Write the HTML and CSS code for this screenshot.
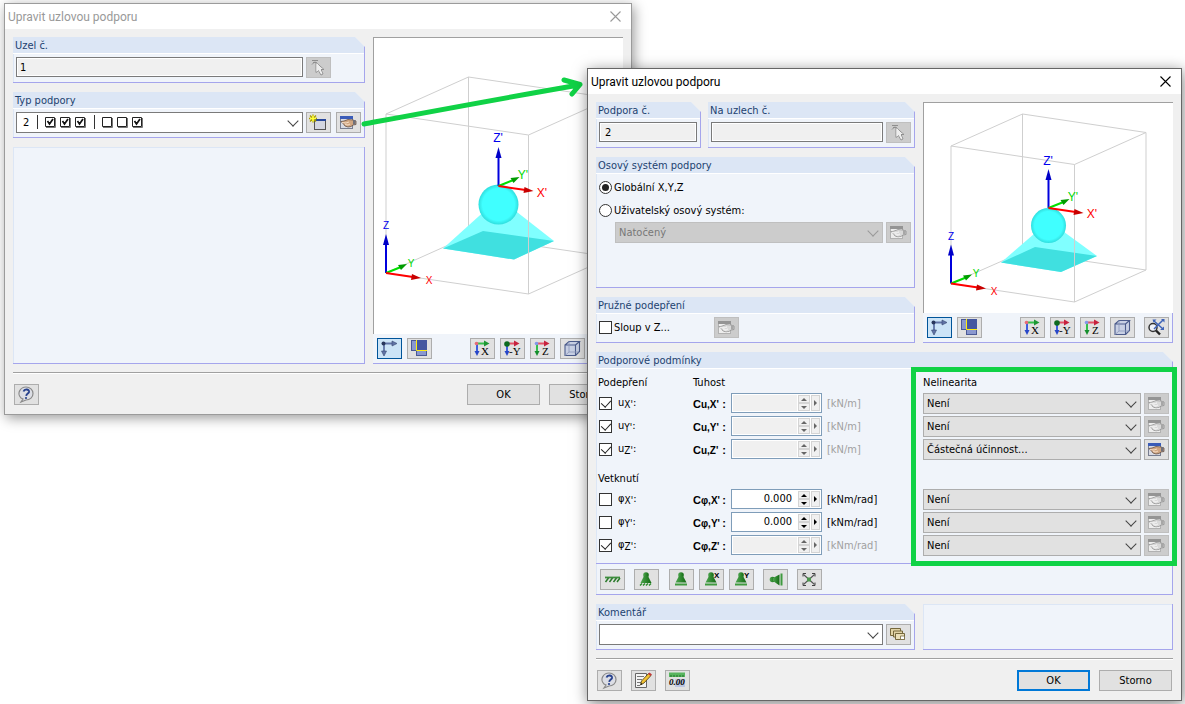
FILE: index.html
```html
<!DOCTYPE html>
<html lang="cs">
<head>
  <meta charset="UTF-8">
  <title>Upravit uzlovou podporu</title>
  <link rel="stylesheet" href="styles.css">
</head>
<body>

<!-- icon library -->
<svg class="iconLibrary" aria-hidden="true">
  <defs>
    <linearGradient id="greenShade" x1="0" x2="1" y1="0" y2="0">
      <stop offset="0" stop-color="#4fa64f"/><stop offset="1" stop-color="#126a12"/>
    </linearGradient>
    <radialGradient id="ballShade" cx="0.5" cy="0.5" r="0.5">
      <stop offset="0.8" stop-color="#40ffff"/><stop offset="1" stop-color="#30dede"/>
    </radialGradient>
    <symbol id="i-close" viewBox="0 0 11 11"><path d="M0.5 0.5L10.5 10.5M10.5 0.5L0.5 10.5" fill="none" stroke="currentColor" stroke-width="1.1"/></symbol>
    <symbol id="i-pick" viewBox="1 1 23 19">
      <path d="M6 3.500h6M7 5.500h4M6 7.500l3-3" stroke="#555" fill="none"/>
      <path d="M10 5.500v10l2.500-2 2.500 4.500 2-1-2-4.500h3z" fill="#fff" stroke="#555" stroke-width="1"/>
    </symbol>
    <symbol id="i-new" viewBox="1 1 23 19">
      <rect x="8.500" y="7.500" width="11" height="10" fill="#d3d6e0" stroke="#555"/>
      <rect x="8" y="7" width="12" height="2" fill="#27479b"/>
      <path d="M7 2.500v8M3 6.500h8M4 3.500l6 6M10 3.500l-6 6" stroke="#a89b00" stroke-width="1.400"/>
      <path d="M7 3.500v6M4 6.500h6" stroke="#ffff3c" stroke-width="1.600"/>
    </symbol>
    <symbol id="i-hand" viewBox="1 1 23 19">
      <rect x="4.500" y="4.500" width="12" height="12" fill="#d9dbe4" stroke="#777d90"/>
      <rect x="4" y="4" width="13" height="3" fill="#3a5cb8"/>
      <path d="M5 9.500l3-0.500 4-1.500 5 0.500 3 1v3.500l-3 0.500-2 1.500-3 0.500-3-1-1.500-2z" fill="#d0a682" stroke="#5a4436" stroke-width="0.700"/>
      <path d="M6 10.500l4 0.500 3-1M9 12.500l3 0.500 2-1" stroke="#f6dcc4" fill="none"/>
      <path d="M17 8h2.500v4.500H17z" fill="#70707a"/>
    </symbol>
    <symbol id="i-axes" viewBox="1 1 23 19">
      <path d="M6 5.500h10M7 6v8" stroke="#6275a8" stroke-width="1.800"/>
      <path d="M15 3l5 2.500-5 2.500zM4.500 13h5l-2.500 5z" fill="#6275a8" stroke="#36456f" stroke-width="0.600"/>
      <circle cx="6.500" cy="5.500" r="2" fill="#28365c"/>
    </symbol>
    <symbol id="i-planes" viewBox="1 1 23 19">
      <rect x="4.500" y="2.500" width="6" height="10" fill="#8a98cf" stroke="#4a5996"/>
      <rect x="9.500" y="12.500" width="10" height="5" fill="#8a98cf" stroke="#4a5996"/>
      <rect x="10" y="2" width="10" height="10" fill="#4557a0"/>
      <path d="M9.500 2v10.500H20" fill="none" stroke="#ffee10"/>
    </symbol>
    <symbol id="i-viewX" viewBox="1 1 23 19">
      <path d="M7 6v8" stroke="#3d5fe0" stroke-width="2"/><path d="M4.500 13h5l-2.500 5z" fill="#2746c8"/>
      <path d="M7 5.500h8" stroke="#35bf4b" stroke-width="2"/><path d="M14 2.500l5.500 3-5.500 3z" fill="#1d9834"/>
      <circle cx="6.500" cy="5.500" r="1.800" fill="#e86a78"/>
      <text x="11" y="17" class="iconLetter">X</text>
    </symbol>
    <symbol id="i-viewY" viewBox="1 1 23 19">
      <path d="M7 6v8" stroke="#3d5fe0" stroke-width="2"/><path d="M4.500 13h5l-2.500 5z" fill="#2746c8"/>
      <path d="M7 5.500h8" stroke="#e25267" stroke-width="2"/><path d="M14 2.500l5.500 3-5.500 3z" fill="#c7223e"/>
      <circle cx="7" cy="6" r="2.800" fill="#0c6b1f"/>
      <text x="9" y="17" class="iconLetter">-Y</text>
    </symbol>
    <symbol id="i-viewZ" viewBox="1 1 23 19">
      <path d="M7 6v8" stroke="#35bf4b" stroke-width="2"/><path d="M4.500 13h5l-2.500 5z" fill="#148e2c"/>
      <path d="M7 5.500h8" stroke="#e25267" stroke-width="2"/><path d="M14 2.500l5.500 3-5.500 3z" fill="#c7223e"/>
      <circle cx="6.500" cy="5.500" r="1.800" fill="#8398ea"/>
      <text x="12" y="17" class="iconLetter">Z</text>
    </symbol>
    <symbol id="i-cube" viewBox="1 1 23 19">
      <path d="M5 7l4-3.500h10.500v10L16 17.500H5z" fill="#c8d0e4"/>
      <path d="M5 7h10.500v10.500H5zM5 7l4-3.500h10.500L15.500 7M19.500 3.500v10l-4 4" fill="none" stroke="#4c5c8c" stroke-width="1.100"/>
      <path d="M9 3.500v10.500h10M9 14l-4 3.500" fill="none" stroke="#8c98ba" stroke-width="0.800"/>
    </symbol>
    <symbol id="i-fit" viewBox="1 1 23 19">
      <circle cx="9" cy="10.500" r="4" fill="#eef2fa" stroke="#333" stroke-width="1.500"/>
      <path d="M12 13.500l4 4" stroke="#222" stroke-width="2.400"/>
      <path d="M10 4l9 8M19 3l-9 9" stroke="#3d63b8" stroke-width="1.500"/>
      <path d="M17 2h3.500v3.500zM20 13h-4l4-3.500zM8.500 2.500h4l-3 3z" fill="#3d63b8"/>
    </symbol>
    <symbol id="i-help" viewBox="1 1 23 19">
      <path d="M7 14c-5-5 0-11 5-11 4 0 7 3 7 6.500S16 16 12 16l-5 2 2-3z" fill="#dcdee5" stroke="#8a8a8a" stroke-width="1.200"/>
      <path d="M9.500 7.500c1-3 6-2.500 5.500 0.500-0.300 1.500-2.500 1.800-2.800 3.800" fill="none" stroke="#27418d" stroke-width="1.900"/>
      <circle cx="12" cy="14" r="1.100" fill="#27418d"/>
    </symbol>
    <symbol id="i-edit" viewBox="1 1 23 19">
      <path d="M4.500 3.500h11v14h-11z" fill="#f4f4f4" stroke="#666"/>
      <path d="M6 6.500h7M6 9.500h5M6 12.500h4M6 15.500h3" stroke="#777"/>
      <path d="M9.500 15l1-4 7-7.500 2.500 2-7 7.500z" fill="#f1c232" stroke="#4b3a10" stroke-width="0.800"/>
      <path d="M17 4l1.500-1.500 2.500 2L19.500 6z" fill="#c23a3a"/>
      <path d="M9.500 15l0.800-2 1.200 1z" fill="#111"/>
    </symbol>
    <symbol id="i-units" viewBox="1 1 23 19">
      <path d="M4 2.500h16v4.500H4z" fill="#58b45f"/><path d="M6 5v2M9 5v2M12 5v2M15 5v2M18 5v2" stroke="#1f6e28"/>
      <path d="M10 9h10v8H10z" fill="#bcc6e2"/>
      <text x="4" y="15" class="iconUnits">0.00</text>
    </symbol>
    <symbol id="i-cards" viewBox="1 1 23 19">
      <path d="M4.500 4.500h10v7h-10z" fill="#e1d3a5" stroke="#76683c"/>
      <path d="M7.500 7h9v6h-9z" fill="#e1d3a5" stroke="#76683c"/>
      <path d="M9.500 9.500h9v6h-9z" fill="#eadfb9" stroke="#76683c"/>
      <path d="M14.500 12h4v3.500h-4z" fill="#fff" stroke="#76683c" stroke-width="0.800"/>
    </symbol>
    <symbol id="i-fixed" viewBox="1 1 23 19">
      <path d="M5 8.500h15" stroke="#3f8f3f" stroke-width="1.800"/>
      <path d="M5.500 13l3-4M9.500 13l3-4M13.500 13l3-4M17 13l3-4" stroke="#2b7a2b" stroke-width="1.500"/>
    </symbol>
    <symbol id="i-hinged" viewBox="1 1 23 19">
      <circle cx="12" cy="6" r="2.800" fill="url(#greenShade)"/><path d="M10 7h4l3.500 7H6.500z" fill="url(#greenShade)"/>
      <path d="M6 16.500l2-2M9 16.500l2-2M12 16.500l2-2M15 16.500l2-2" stroke="#2b8a2b" stroke-width="1.400"/>
    </symbol>
    <symbol id="i-slide" viewBox="1 1 23 19">
      <circle cx="12" cy="6" r="2.800" fill="url(#greenShade)"/><path d="M10 7h4l3.500 6.500H6.500z" fill="url(#greenShade)"/>
      <path d="M6 14.500h12v2H6z" fill="#3f9a3f"/>
    </symbol>
    <symbol id="i-slideX" viewBox="1 1 23 19"><use href="#i-slide" x="1" y="1" width="23" height="19"/><text x="15" y="9" class="iconTag">X</text></symbol>
    <symbol id="i-slideY" viewBox="1 1 23 19"><use href="#i-slide" x="1" y="1" width="23" height="19"/><text x="15" y="9" class="iconTag">Y</text></symbol>
    <symbol id="i-side" viewBox="1 1 23 19">
      <circle cx="9.500" cy="10.500" r="2.800" fill="url(#greenShade)"/><path d="M10 9l6.500-3.500v11L10 12z" fill="url(#greenShade)"/>
      <path d="M17.500 4.500h2v12h-2z" fill="#3f9a3f"/>
    </symbol>
    <symbol id="i-free" viewBox="1 1 23 19">
      <path d="M6.500 5.500l11 10M17.500 5.500l-11 10" stroke="#555" stroke-width="1.100"/>
      <path d="M6 7.500V4.500h3M15 4.500h3v3M18 13.500v3h-3M9 16.500H6v-3" fill="none" stroke="#444"/>
      <rect x="10" y="8.500" width="4" height="4" fill="#4b964b"/>
    </symbol>
    <!-- coordinate tripod, origin at 0,0 -->
    <g id="tripod">
      <path d="M0 0L0 -30" stroke="#00d" stroke-width="2"/><path d="M-3 -28h6L0 -39z" fill="#0000c8"/>
      <path d="M0 0L15 -6" stroke="#00e000" stroke-width="2"/><path d="M12 -8l9 -1-6 6z" fill="#009c00"/>
      <path d="M0 0L27 4" stroke="#f00" stroke-width="2"/><path d="M26 1l9 4-10 2z" fill="#c80000"/>
    </g>
  </defs>
</svg>

<main class="desktop">

  <!-- parent dialog -->
  <section class="dialog dialogBack">
    <header class="titleBar">
      <h1>Upravit uzlovou podporu</h1>
      <button class="closeButton" aria-label="Zavřít"><svg><use href="#i-close"/></svg></button>
    </header>
    <div class="columns">
      <div class="settings">
        <section class="group">
          <h2><label for="nodeNo">Uzel č.</label></h2>
          <div class="fieldRow">
            <input class="textField" id="nodeNo" value="1" readonly>
            <button class="iconButton" disabled aria-label="Vybrat"><svg><use href="#i-pick"/></svg></button>
            <span class="buttonSpace"></span>
          </div>
        </section>
        <section class="group">
          <h2><label for="supportType">Typ podpory</label></h2>
          <div class="fieldRow">
            <div class="combo comboWhite">
              <select id="supportType"><option>2</option></select>
              <svg class="typePreview" viewBox="0 0 104 15" aria-hidden="true">
                <path d="M0.500 1v14M57.500 1v14" stroke="#333"/>
                <path d="M18.500 4v9.500H9M33.500 4v9.500H24M48.500 4v9.500H39M75.500 4v9.500H66M90.500 4v9.500H81M105.500 4v9.500H96" fill="none" stroke="#777"/>
                <path d="M8.500 3.500h9v9h-9zM23.500 3.500h9v9h-9zM38.500 3.500h9v9h-9zM65.500 3.500h9v9h-9zM80.500 3.500h9v9h-9zM95.500 3.500h9v9h-9z" fill="#fff" stroke="#222"/>
                <path d="M10.500 7l2 3 3.500-5M25.500 7l2 3 3.500-5M40.500 7l2 3 3.500-5M97.500 7l2 3 3.500-5" fill="none" stroke="#111" stroke-width="1.700"/>
              </svg>
            </div>
            <button class="iconButton" aria-label="Nový"><svg><use href="#i-new"/></svg></button>
            <button class="iconButton" aria-label="Upravit"><svg><use href="#i-hand"/></svg></button>
          </div>
        </section>
        <div class="group blank grow"></div>
      </div>
      <div class="view">
        <svg class="scene" viewBox="0 0 249 296" role="img" aria-label="Podpora">
          <g class="cube"><path d="M12 76L94.500 39 237 60 154.500 97zM12 235L94.500 198 237 219M12 76v159M94.500 39v159M237 60v159"/></g>
          <path d="M69 210.500L125 160l55 43-40 18.500z" fill="#80ffff"/>
          <path d="M69 210.500L109 193l71 10-40 18.500z" fill="#40e0e0"/>
          <circle cx="124.500" cy="166.500" r="20" fill="url(#ballShade)"/>
          <g class="cube"><path d="M12 235l142.500 21L237 219M154.500 97v159"/></g>
          <use href="#tripod" x="12" y="235"/>
          <text x="12" y="191" class="axisZ">Z</text><text x="37" y="229" class="axisY">Y</text><text x="55" y="246" class="axisX">X</text>
          <use href="#tripod" x="124.500" y="148"/>
          <text x="124" y="104" class="axisZ local">Z'</text><text x="149" y="141" class="axisY local">Y'</text><text x="168" y="159" class="axisX local">X'</text>
        </svg>
        <div class="viewTools">
          <button class="iconButton pressed" aria-label="Osy"><svg><use href="#i-axes"/></svg></button>
          <button class="iconButton" aria-label="Roviny"><svg><use href="#i-planes"/></svg></button>
          <button class="iconButton pushRight" aria-label="Pohled X"><svg><use href="#i-viewX"/></svg></button>
          <button class="iconButton" aria-label="Pohled -Y"><svg><use href="#i-viewY"/></svg></button>
          <button class="iconButton" aria-label="Pohled Z"><svg><use href="#i-viewZ"/></svg></button>
          <button class="iconButton" aria-label="Izometrie"><svg><use href="#i-cube"/></svg></button>
          <button class="iconButton apart" aria-label="Celý pohled"><svg><use href="#i-fit"/></svg></button>
        </div>
      </div>
    </div>
    <footer class="dialogFooter">
      <button class="iconButton" aria-label="Nápověda"><svg><use href="#i-help"/></svg></button>
      <button class="pushButton pushRight">OK</button>
      <button class="pushButton">Storno</button>
    </footer>
  </section>

  <svg class="arrow" viewBox="0 0 226 52" aria-hidden="true">
    <path d="M5 47C75 34 150 20 220 8M205 3L221 7.500 213 17" fill="none" stroke="#10d246" stroke-width="5" stroke-linecap="round" stroke-linejoin="round"/>
  </svg>

  <!-- child dialog -->
  <section class="dialog dialogFront">
    <header class="titleBar">
      <h1>Upravit uzlovou podporu</h1>
      <button class="closeButton" aria-label="Zavřít"><svg><use href="#i-close"/></svg></button>
    </header>
    <div class="columns">
      <div class="settings">
        <div class="groupPair">
          <section class="group narrow">
            <h2><label for="supportNo">Podpora č.</label></h2>
            <div class="fieldRow"><input class="textField indent" id="supportNo" value="2" readonly></div>
          </section>
          <section class="group grow">
            <h2><label for="onNodes">Na uzlech č.</label></h2>
            <div class="fieldRow">
              <input class="textField" id="onNodes" readonly>
              <button class="iconButton" disabled aria-label="Vybrat"><svg><use href="#i-pick"/></svg></button>
            </div>
          </section>
        </div>
        <section class="group axisGroup grow">
          <h2>Osový systém podpory</h2>
          <label class="optionRow"><input type="radio" name="axis" checked>Globální X,Y,Z</label>
          <label class="optionRow"><input type="radio" name="axis">Uživatelský osový systém:</label>
          <div class="fieldRow sub">
            <div class="combo"><select disabled aria-label="Osový systém"><option>Natočený</option></select></div>
            <button class="iconButton" disabled aria-label="Upravit"><svg><use href="#i-hand"/></svg></button>
          </div>
        </section>
        <section class="group">
          <h2>Pružné podepření</h2>
          <div class="fieldRow">
            <label class="optionRow columnOption"><input type="checkbox">Sloup v Z...</label>
            <button class="iconButton" disabled aria-label="Upravit"><svg><use href="#i-hand"/></svg></button>
          </div>
        </section>
      </div>
      <div class="view">
        <svg class="scene" viewBox="0 0 249 210" role="img" aria-label="Podpora">
          <g class="cube"><path d="M27 43L98.500 11 222 29.500 150.500 61.500zM27 180.500L98.500 149 222 167M27 43v137.500M98.500 11v138M222 29.500V167"/></g>
          <path d="M77 159.500L125 118l48 35-36 16z" fill="#80ffff"/>
          <path d="M77 159.500L111 144l62 9-36 16z" fill="#40e0e0"/>
          <circle cx="124.500" cy="122.500" r="17.500" fill="url(#ballShade)"/>
          <g class="cube"><path d="M27 180.500l123.500 18.500L222 167M150.500 61.500V199"/></g>
          <use href="#tripod" x="27" y="180.500"/>
          <text x="27" y="137" class="axisZ">Z</text><text x="52" y="174" class="axisY">Y</text><text x="70" y="192" class="axisX">X</text>
          <use href="#tripod" x="124.500" y="105"/>
          <text x="124" y="62" class="axisZ local">Z'</text><text x="149" y="98" class="axisY local">Y'</text><text x="168" y="115" class="axisX local">X'</text>
        </svg>
        <div class="viewTools">
          <button class="iconButton pressed" aria-label="Osy"><svg><use href="#i-axes"/></svg></button>
          <button class="iconButton" aria-label="Roviny"><svg><use href="#i-planes"/></svg></button>
          <button class="iconButton pushRight" aria-label="Pohled X"><svg><use href="#i-viewX"/></svg></button>
          <button class="iconButton" aria-label="Pohled -Y"><svg><use href="#i-viewY"/></svg></button>
          <button class="iconButton" aria-label="Pohled Z"><svg><use href="#i-viewZ"/></svg></button>
          <button class="iconButton" aria-label="Izometrie"><svg><use href="#i-cube"/></svg></button>
          <button class="iconButton apart" aria-label="Celý pohled"><svg><use href="#i-fit"/></svg></button>
        </div>
      </div>
    </div>

    <section class="group conditions">
      <h2>Podporové podmínky</h2>
      <div class="conditionGrid">
        <div class="conditionRow headRow"><span>Podepření</span><span>Tuhost</span><span></span><span></span><span>Nelinearita</span></div>
        <div class="conditionRow">
          <label class="dof"><input type="checkbox" checked>u<small>X'</small>:</label>
          <label class="constant" for="cux">C<small>u,X'</small><i>:</i></label>
          <div class="spin"><input id="cux" disabled><span class="spinPair"><button class="up" disabled aria-label="Více"></button><button class="down" disabled aria-label="Méně"></button></span><button class="next" disabled aria-label="Další"></button></div>
          <span class="unit off">[kN/m]</span>
          <div class="combo"><select aria-label="Nelinearita uX"><option>Není</option></select></div>
          <button class="iconButton" disabled aria-label="Upravit"><svg><use href="#i-hand"/></svg></button>
        </div>
        <div class="conditionRow">
          <label class="dof"><input type="checkbox" checked>u<small>Y'</small>:</label>
          <label class="constant" for="cuy">C<small>u,Y'</small><i>:</i></label>
          <div class="spin"><input id="cuy" disabled><span class="spinPair"><button class="up" disabled aria-label="Více"></button><button class="down" disabled aria-label="Méně"></button></span><button class="next" disabled aria-label="Další"></button></div>
          <span class="unit off">[kN/m]</span>
          <div class="combo"><select aria-label="Nelinearita uY"><option>Není</option></select></div>
          <button class="iconButton" disabled aria-label="Upravit"><svg><use href="#i-hand"/></svg></button>
        </div>
        <div class="conditionRow">
          <label class="dof"><input type="checkbox" checked>u<small>Z'</small>:</label>
          <label class="constant" for="cuz">C<small>u,Z'</small><i>:</i></label>
          <div class="spin"><input id="cuz" disabled><span class="spinPair"><button class="up" disabled aria-label="Více"></button><button class="down" disabled aria-label="Méně"></button></span><button class="next" disabled aria-label="Další"></button></div>
          <span class="unit off">[kN/m]</span>
          <div class="combo"><select aria-label="Nelinearita uZ"><option>Částečná účinnost...</option></select></div>
          <button class="iconButton" aria-label="Upravit"><svg><use href="#i-hand"/></svg></button>
        </div>
        <div class="conditionRow headRow second"><span>Vetknutí</span></div>
        <div class="conditionRow">
          <label class="dof"><input type="checkbox">φ<small>X'</small>:</label>
          <label class="constant" for="cpx">C<small>φ,X'</small><i>:</i></label>
          <div class="spin"><input id="cpx" value="0.000"><span class="spinPair"><button class="up" aria-label="Více"></button><button class="down" aria-label="Méně"></button></span><button class="next" aria-label="Další"></button></div>
          <span class="unit">[kNm/rad]</span>
          <div class="combo"><select aria-label="Nelinearita φX"><option>Není</option></select></div>
          <button class="iconButton" disabled aria-label="Upravit"><svg><use href="#i-hand"/></svg></button>
        </div>
        <div class="conditionRow">
          <label class="dof"><input type="checkbox">φ<small>Y'</small>:</label>
          <label class="constant" for="cpy">C<small>φ,Y'</small><i>:</i></label>
          <div class="spin"><input id="cpy" value="0.000"><span class="spinPair"><button class="up" aria-label="Více"></button><button class="down" aria-label="Méně"></button></span><button class="next" aria-label="Další"></button></div>
          <span class="unit">[kNm/rad]</span>
          <div class="combo"><select aria-label="Nelinearita φY"><option>Není</option></select></div>
          <button class="iconButton" disabled aria-label="Upravit"><svg><use href="#i-hand"/></svg></button>
        </div>
        <div class="conditionRow">
          <label class="dof"><input type="checkbox" checked>φ<small>Z'</small>:</label>
          <label class="constant" for="cpz">C<small>φ,Z'</small><i>:</i></label>
          <div class="spin"><input id="cpz" disabled><span class="spinPair"><button class="up" disabled aria-label="Více"></button><button class="down" disabled aria-label="Méně"></button></span><button class="next" disabled aria-label="Další"></button></div>
          <span class="unit off">[kNm/rad]</span>
          <div class="combo"><select aria-label="Nelinearita φZ"><option>Není</option></select></div>
          <button class="iconButton" disabled aria-label="Upravit"><svg><use href="#i-hand"/></svg></button>
        </div>
      </div>
      <div class="presets">
        <button class="iconButton" aria-label="Vetknutí"><svg><use href="#i-fixed"/></svg></button>
        <button class="iconButton" aria-label="Kloub"><svg><use href="#i-hinged"/></svg></button>
        <div class="presetSet">
          <button class="iconButton" aria-label="Posuvná"><svg><use href="#i-slide"/></svg></button>
          <button class="iconButton" aria-label="Posuvná v X"><svg><use href="#i-slideX"/></svg></button>
          <button class="iconButton" aria-label="Posuvná v Y"><svg><use href="#i-slideY"/></svg></button>
        </div>
        <button class="iconButton" aria-label="Boční"><svg><use href="#i-side"/></svg></button>
        <button class="iconButton" aria-label="Volná"><svg><use href="#i-free"/></svg></button>
      </div>
    </section>

    <div class="columns lower">
      <section class="group settings">
        <h2><label for="comment">Komentář</label></h2>
        <div class="fieldRow">
          <div class="combo comboWhite"><select id="comment"><option></option></select></div>
          <button class="iconButton" aria-label="Komentáře"><svg><use href="#i-cards"/></svg></button>
        </div>
      </section>
      <div class="group blank view"></div>
    </div>

    <footer class="dialogFooter">
      <button class="iconButton" aria-label="Nápověda"><svg><use href="#i-help"/></svg></button>
      <button class="iconButton" aria-label="Poznámka"><svg><use href="#i-edit"/></svg></button>
      <button class="iconButton" aria-label="Jednotky"><svg><use href="#i-units"/></svg></button>
      <button class="pushButton primary pushRight">OK</button>
      <button class="pushButton">Storno</button>
    </footer>
    <div class="highlight"></div>
  </section>
</main>
</body>
</html>
```
FILE: styles.css
```css
:root {
  --face: #f0f0f0;
  --panel: #f0f4fa;
  --panelHead: #dce6f5;
  --panelEdge: #a5a5ec;
  --heading: #1c4270;
  --button: #e1e1e1;
  --edge: #adadad;
  --marker: #10d246;
}
* {
  box-sizing: border-box;
}
body {
  margin: 0;
  background: #fff;
  color: #000;
  font: 11px/14px "DejaVu Sans Condensed", "DejaVu Sans", sans-serif;
  overflow: hidden;
}
button, input, select {
  font: inherit;
  color: inherit;
  margin: 0;
  padding: 0;
}
h1, h2 {
  margin: 0;
  font-size: 11px;
  font-weight: normal;
}
.iconLibrary {
  position: absolute;
  width: 0;
  height: 0;
}
.desktop {
  position: relative;
  min-height: 100vh;
}

/* windows */
.dialog {
  position: absolute;
  background: var(--face);
  border: 1px solid #9b9b9b;
}
.dialogBack {
  left: 4px;
  top: 3px;
  width: 628px;
  box-shadow: 2px 3px 12px rgba(0, 0, 0, 0.4);
}
.dialogFront {
  left: 587px;
  top: 68px;
  width: 595px;
  border-color: #666;
  box-shadow: 1px 3px 14px rgba(0, 0, 0, 0.5);
}
.titleBar {
  display: flex;
  align-items: center;
  justify-content: space-between;
  height: 25px;
  padding: 0 10px 0 3px;
  background: #fff;
}
.titleBar h1 {
  font-family: Roboto, sans-serif;
  font-size: 12px;
}
.closeButton {
  display: flex;
  border: 0;
  background: none;
}
.closeButton svg {
  width: 11px;
  height: 11px;
}
.dialogBack .titleBar {
  color: #999;
}
.columns {
  display: flex;
  gap: 8px;
  padding: 8px 8px 0;
}
.settings {
  flex: 1;
  min-width: 0;
}
.columns > div.settings {
  display: flex;
  flex-direction: column;
  gap: 9px;
}
.grow {
  flex: 1;
}

/* framed groups with the cut corner */
.group {
  background: var(--panel);
  border: 1px solid var(--panelEdge);
  border-width: 0 1px 1px 0;
  box-shadow: inset 1px 0 var(--panelHead);
  clip-path: polygon(0 0, calc(100% - 10px) 0, 100% 10px, 100% 100%, 0 100%);
}
.group h2 {
  height: 17px;
  padding: 1px 2px 0;
  line-height: 15px;
  color: var(--heading);
  background: var(--panelHead);
  border-bottom: 1px solid #fff;
}
.blank {
  clip-path: none;
  box-shadow: inset 1px 1px var(--panelHead);
}
.groupPair {
  display: flex;
  gap: 7px;
}
.narrow {
  width: 105px;
}
.fieldRow {
  display: flex;
  gap: 3px;
  padding: 3px 3px 4px;
}
.fieldRow .iconButton + .iconButton {
  margin-left: 2px;
}
.textField {
  flex: 1;
  min-width: 0;
  height: 20px;
  padding: 0 3px;
  background: var(--face);
  border: 1px solid #7a7a7a;
  box-shadow: inset 0 0 0 1px #fff;
}
.indent {
  padding-left: 5px;
}
.buttonSpace {
  width: 27px;
}
.axisGroup {
  min-height: 130px;
}
.axisGroup h2 {
  margin-bottom: 2px;
}
.optionRow {
  display: flex;
  align-items: center;
  gap: 2px;
  height: 23px;
  margin-left: 3px;
}
.fieldRow.sub {
  padding: 0 3px 4px 19px;
}
.columnOption {
  width: 112px;
  height: 21px;
  margin-left: 0;
}

/* controls */
input[type="checkbox"], input[type="radio"] {
  appearance: none;
  flex: none;
  position: relative;
  width: 13px;
  height: 13px;
  background: #fff;
  border: 1px solid #333;
}
input[type="radio"] {
  border-radius: 50%;
}
input[type="radio"]:checked::after {
  content: "";
  position: absolute;
  inset: 2px;
  border-radius: 50%;
  background: #222;
}
input[type="checkbox"]:checked::after {
  content: "";
  position: absolute;
  left: 3px;
  top: 0;
  width: 5px;
  height: 8px;
  border: solid #222;
  border-width: 0 1px 1px 0;
  transform: rotate(42deg);
}
.iconButton {
  flex: none;
  display: block;
  width: 25px;
  height: 21px;
  background: var(--button);
  border: 1px solid var(--edge);
}
.iconButton svg {
  display: block;
  width: 23px;
  height: 19px;
}
.iconButton:disabled {
  background: #ccc;
  border-color: #bfbfbf;
}
.iconButton:disabled svg {
  filter: grayscale(1) brightness(1.3);
  opacity: 0.65;
}
.pressed {
  background: #cce4f7;
  border-color: #005499;
}
.iconLetter {
  font: 11px "Liberation Serif", serif;
}
.iconUnits {
  font: italic bold 9px "Liberation Serif", serif;
}
.iconTag {
  font: bold 8px "Liberation Sans", sans-serif;
}
.combo {
  position: relative;
  flex: 1;
  min-width: 0;
}
.combo select {
  appearance: none;
  display: block;
  width: 100%;
  height: 21px;
  padding: 0 20px 0 3px;
  background: var(--button);
  border: 1px solid var(--edge);
  border-radius: 0;
}
.combo::after {
  content: "";
  position: absolute;
  right: 6px;
  top: 5px;
  width: 7px;
  height: 7px;
  border: solid #444;
  border-width: 0 1px 1px 0;
  transform: rotate(45deg);
  pointer-events: none;
}
.comboWhite select {
  background: #fff;
  border-color: #7a7a7a;
  padding-left: 6px;
}
.combo select:disabled {
  background: #ccc;
  border-color: #bfbfbf;
  color: #777;
  opacity: 1;
}
.combo:has(select:disabled)::after {
  border-color: #999;
}
.typePreview {
  position: absolute;
  left: 21px;
  top: 2px;
  width: 104px;
  height: 15px;
  overflow: visible;
  pointer-events: none;
}
.pushButton {
  width: 73px;
  height: 21px;
  background: var(--button);
  border: 1px solid var(--edge);
}
.primary {
  border: 2px solid #0078d7;
}
.pushRight {
  margin-left: auto;
}

/* preview */
.view {
  display: flex;
  flex-direction: column;
  width: 250px;
}
.scene {
  display: block;
  width: 100%;
  background: #fff;
  border: 1px solid #a0a0a0;
  border-width: 1px 0 0 1px;
}
.cube {
  fill: none;
  stroke: #cfcfcf;
}
.axisZ, .axisY, .axisX {
  font: 10px "Liberation Sans", sans-serif;
  text-anchor: middle;
}
.local {
  font-size: 12px;
}
.axisZ {
  fill: #00e;
}
.axisY {
  fill: #00d800;
}
.axisX {
  fill: #f00;
}
.viewTools {
  display: flex;
  gap: 5px;
  padding: 4px 3px 4px 4px;
  background: var(--panel);
  border: solid var(--panelEdge);
  border-width: 0 1px 1px 0;
}
.apart {
  margin-left: 4px;
}

/* support conditions */
.conditions {
  margin: 9px 8px 0;
}
.conditionGrid {
  padding-bottom: 6px;
  border-bottom: 1px solid var(--panelEdge);
}
.conditionRow {
  display: grid;
  grid-template-columns: 95px 38px 91px minmax(0, 1fr) 218px 28px;
  align-items: center;
  height: 23px;
  padding: 0 3px 0 2px;
}
.conditionRow .iconButton {
  justify-self: end;
}
.headRow {
  padding-top: 4px;
}
.second {
  height: 27px;
  padding-top: 8px;
}
.dof {
  display: flex;
  align-items: center;
  padding: 0 0 1px 1px;
}
.dof input {
  margin-right: 6px;
}
.dof small, .constant small {
  font-size: 10px;
  padding-top: 3px;
}
.constant {
  display: flex;
  align-items: center;
  font-family: "Liberation Sans", sans-serif;
  font-weight: bold;
}
.constant i {
  font-style: normal;
  margin: 0 5px 0 auto;
}
.spin {
  display: flex;
  gap: 1px;
  height: 20px;
  margin-bottom: 1px;
  padding: 1px;
  background: #fff;
  border: 1px solid #7f9db9;
}
.spin input {
  flex: 1;
  min-width: 0;
  padding-right: 5px;
  border: 0;
  text-align: right;
  background: #fff;
}
.spin input:disabled {
  background: var(--face);
}
.spinPair {
  display: flex;
  flex-direction: column;
  width: 12px;
}
.spin button {
  display: flex;
  flex: 1;
  align-items: center;
  justify-content: center;
  background: var(--face);
  border: 1px solid #d4d4d4;
}
.spin button.next {
  flex: none;
  width: 9px;
}
.spin button::after {
  content: "";
  border: 3px solid transparent;
}
.spin .up::after {
  border-width: 0 3px 3px;
  border-bottom-color: currentColor;
}
.spin .down::after {
  border-width: 3px 3px 0;
  border-top-color: currentColor;
}
.spin .next::after {
  border-width: 3px 0 3px 3px;
  border-left-color: currentColor;
}
.spin button:disabled {
  color: #666;
}
.unit {
  padding-left: 5px;
}
.off {
  color: #a0a0a0;
}
.presets {
  display: flex;
  gap: 9px;
  padding: 5px 4px 4px;
}
.presetSet {
  display: flex;
  gap: 5px;
  margin: 0 0 0 1px;
}
.lower {
  padding-top: 9px;
}
.dialogFooter {
  display: flex;
  gap: 9px;
  margin: 8px 8px 0;
  padding: 11px 1px 9px;
  border-top: 1px solid #a0a0a0;
  box-shadow: inset 0 1px #fff;
}

/* annotations drawn over the windows */
.arrow {
  position: absolute;
  left: 359px;
  top: 77px;
  width: 226px;
  height: 52px;
}
.highlight {
  position: absolute;
  right: 4px;
  top: 298px;
  width: 266px;
  height: 199px;
  border: 5px solid var(--marker);
  pointer-events: none;
}
```
